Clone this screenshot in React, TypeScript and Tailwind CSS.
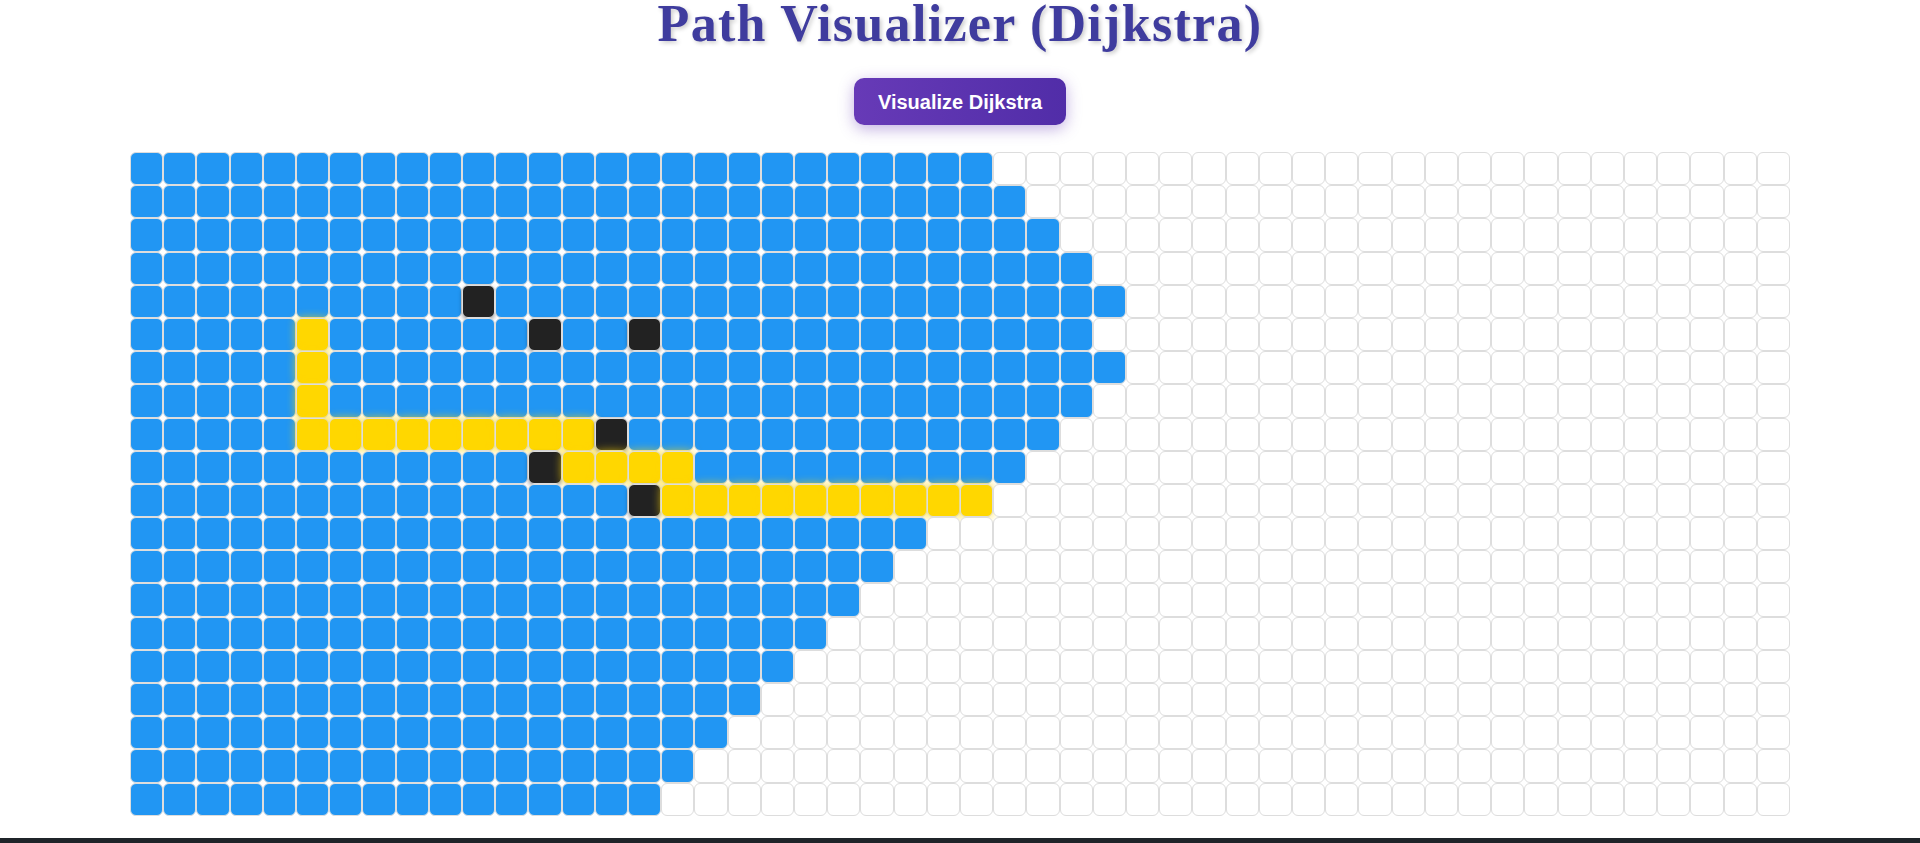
const COLS = 50;
const ROWS = 20;

// how many cells from the left of each row were visited
const visitedCount = [26, 27, 28, 29, 30, 29, 30, 29, 28, 27, 26, 24, 23, 22, 21, 20, 19, 18, 17, 16];

const walls = new Set(["4-10", "5-12", "5-15", "8-14", "9-12", "10-15"]);

const path = new Set<string>([
  "5-5",
  "6-5",
  "7-5",
  ...[5, 6, 7, 8, 9, 10, 11, 12, 13].map((c) => `8-${c}`),
  ...[13, 14, 15, 16].map((c) => `9-${c}`),
  ...[16, 17, 18, 19, 20, 21, 22, 23, 24, 25].map((c) => `10-${c}`),
]);

type Kind = "empty" | "visited" | "wall" | "path";

const cellKind = (r: number, c: number): Kind => {
  const key = `${r}-${c}`;
  if (walls.has(key)) return "wall";
  if (path.has(key)) return "path";
  if (c < visitedCount[r]) return "visited";
  return "empty";
};

const kindClass: Record<Kind, string> = {
  empty: "bg-white",
  visited: "bg-[#2196f3]",
  wall: "bg-[#222222] shadow-[0_2px_4px_rgba(0,0,0,0.35)]",
  path: "bg-[#ffd700] shadow-[0_0_10px_rgba(255,215,0,0.75)]",
};

const Cell = (props: { kind: Kind }) => (
  <div className={`h-[33.2px] rounded-[6px] border border-[#dddddd] ${kindClass[props.kind]}`} />
);

export default function App() {
  return (
    <div className="flex h-[843px] w-full flex-col items-center bg-white">
      <h1 className="text-[52px] leading-[48px] font-bold tracking-[1.3px] text-[#3f3c9e] [font-family:'Liberation_Serif','Times_New_Roman',serif] [text-shadow:2px_2px_4px_rgba(0,0,0,0.2)]">
        Path Visualizer (Dijkstra)
      </h1>
      <button className="mt-[30px] h-[47px] rounded-[10px] bg-gradient-to-r from-[#673ab7] to-[#512da8] px-6 text-[20px] font-bold text-white shadow-[0_4px_15px_rgba(103,58,183,0.4)] [font-family:'Liberation_Sans',Arial,sans-serif]">
        Visualize Dijkstra
      </button>
      <div className="mt-[27px] grid w-[1660px] grid-cols-[repeat(50,minmax(0,1fr))]">
        {Array.from({ length: ROWS }, (_, r) =>
          Array.from({ length: COLS }, (_, c) => <Cell key={`${r}-${c}`} kind={cellKind(r, c)} />)
        )}
      </div>
      <div className="mt-auto h-[5px] w-full bg-[#1f2429]" />
    </div>
  );
}
